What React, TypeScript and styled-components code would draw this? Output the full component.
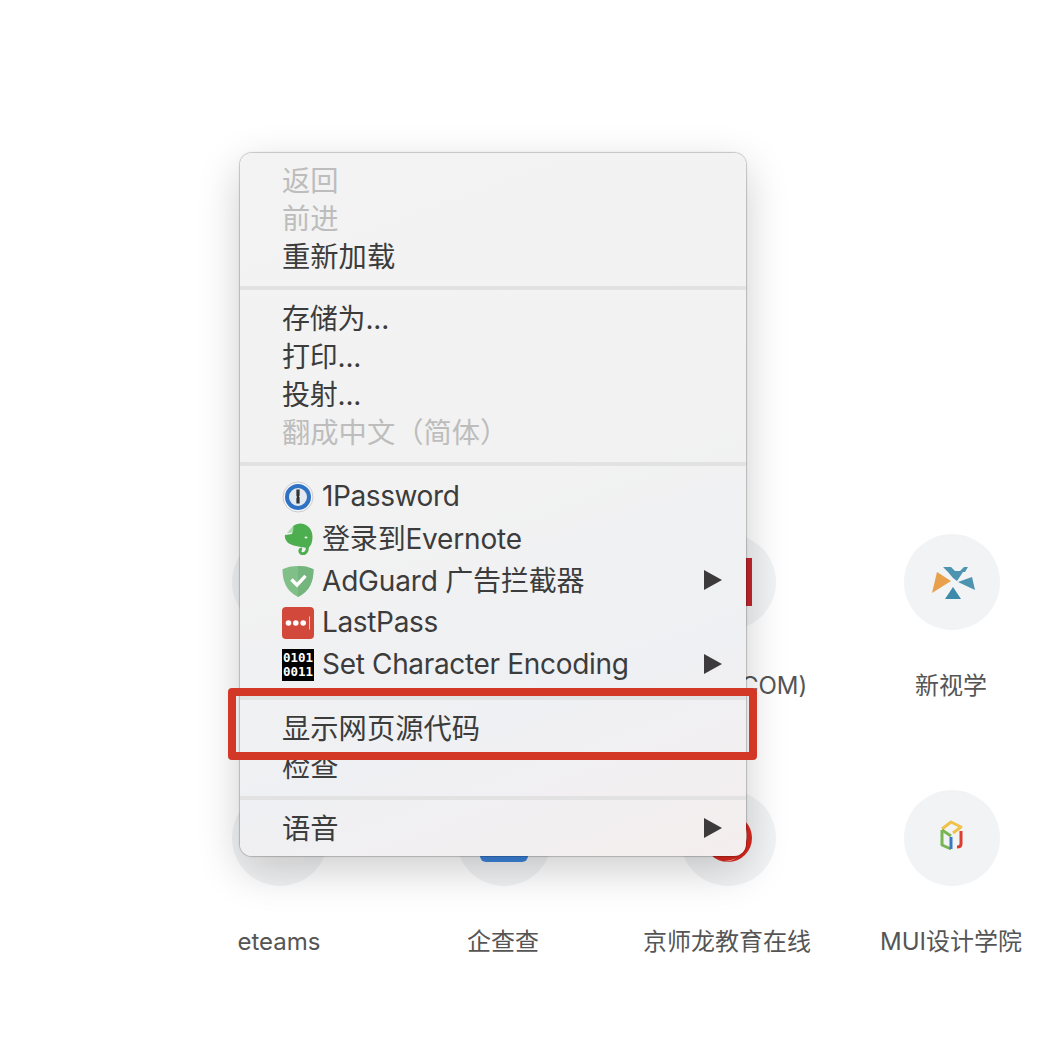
import React from "react";
import styled, { createGlobalStyle } from "styled-components";

const FONT = `Inter, "Noto Sans CJK SC", sans-serif`;

const GlobalStyle = createGlobalStyle`
  html, body {
    margin: 0;
    padding: 0;
    background: #fff;
    font-family: ${FONT};
  }
`;

const Page = styled.div`
  position: relative;
  width: 1056px;
  height: 1048px;
  overflow: hidden;
  background: #fff;
`;

const TileGrid = styled.div`
  display: grid;
  grid-template-columns: repeat(4, 224px);
  grid-auto-rows: 256px;
  padding: 534px 0 0 168px;
`;

const Tile = styled.div`
  display: flex;
  flex-direction: column;
  align-items: center;
`;

const Bubble = styled.div`
  width: 96px;
  height: 96px;
  border-radius: 50%;
  background: #f1f3f5;
  display: flex;
  align-items: center;
  justify-content: center;
  overflow: hidden;
  flex-shrink: 0;
`;

const TileLabel = styled.div`
  margin: 38px 2px 0 0;
  font-size: 24px;
  line-height: 36px;
  color: #555;
  white-space: nowrap;
`;

const RedRect = styled.div`
  width: 48px;
  height: 48px;
  background: #c4262c;
`;

const GreyRect = styled.div`
  width: 48px;
  height: 48px;
  background: #f5f5f5;
`;

const BlueRect = styled.div`
  width: 48px;
  height: 48px;
  border-radius: 6px;
  background: #3d84dc;
`;

const Menu = styled.div`
  position: absolute;
  left: 240px;
  top: 153px;
  width: 506px;
  height: 703px;
  box-sizing: border-box;
  padding: 7px 0;
  border-radius: 12px;
  background: linear-gradient(160deg, #f3f3f3 0%, #f2f2f2 45%, #eff0f3 75%, #f4eeee 100%);
  box-shadow: 0 0 1px 1px rgba(0, 0, 0, 0.2), 0 14px 44px rgba(0, 0, 0, 0.2);
`;

const Row = styled.div<{ $tall?: boolean; $disabled?: boolean }>`
  display: flex;
  align-items: center;
  height: ${(p) => (p.$tall ? 42 : 38)}px;
  padding: 0 24px 0 42px;
  color: ${(p) => (p.$disabled ? "#bdbdbd" : "#3c3c3c")};
`;

const RowText = styled.span<{ $tracking?: number; $nudge?: number }>`
  flex: 1;
  white-space: nowrap;
  font-size: ${(p) => (p.$tracking ? 28 : 28.3)}px;
  letter-spacing: ${(p) => p.$tracking ?? 0}px;
  margin-top: ${(p) => p.$nudge ?? 0}px;
`;

const IconSlot = styled.span`
  display: flex;
  width: 32px;
  height: 32px;
  margin: 4px 8px 0 0;
`;

const BinaryIcon = styled.span`
  width: 32px;
  height: 32px;
  background: #000;
  color: #fff;
  display: flex;
  flex-direction: column;
  align-items: center;
  justify-content: center;
  font-family: "DejaVu Sans Mono", monospace;
  font-size: 12.5px;
  font-weight: 700;
  line-height: 14px;
`;

const Arrow = styled.span`
  width: 0;
  height: 0;
  margin-top: 2px;
  border-left: 18px solid #3c3a3a;
  border-top: 10px solid transparent;
  border-bottom: 10px solid transparent;
`;

const Separator = styled.div`
  height: 4px;
  margin: 12px 0 8px;
  background: #e2e2e2;
`;

const Highlight = styled.div`
  position: absolute;
  left: 228px;
  top: 688px;
  width: 529px;
  height: 72px;
  box-sizing: border-box;
  border: 8px solid #d23825;
  border-radius: 4px;
`;

const OnePasswordIcon = () => (
  <svg width="32" height="32" viewBox="0 0 32 32">
    <circle cx="16" cy="16" r="15" fill="#f4f6f8" stroke="#c9cccf" strokeWidth="1" />
    <circle cx="16" cy="16" r="11" fill="#e3e9f0" stroke="#2f72c4" strokeWidth="4" />
    <path d="M14.400 8.500h3.200v6l-.7.9.7.9v6.200h-3.200v-5.600l.7-1-.7-1z" fill="#333" />
  </svg>
);

const EvernoteIcon = () => (
  <svg width="32" height="32" viewBox="0 0 32 32">
    <path
      d="M3 12 10 11 11 3Q14 .5 18 .5C25 .5 30.500 6 30.500 14 30.500 19 29 23 26 25 20 24 12 23.500 8 21 4 19 2.500 15 3 12z"
      fill="#4cae4f"
    />
    <path d="M25 22C26.500 29 22.500 31.500 19.500 30.500 17 29.500 17.500 26 20 26" fill="none" stroke="#4cae4f" strokeWidth="3" />
    <path d="M11.500 2.500 11 9.500 5 10z" fill="#a8d8a8" />
    <ellipse cx="24" cy="14.500" rx="1.500" ry="1.100" fill="#e8f5e8" />
  </svg>
);

const AdGuardIcon = () => (
  <svg width="32" height="32" viewBox="0 0 32 32">
    <path d="M16 1C10 1 4.500 2.200.5 4.300.5 16 4 26 16 32 28 26 31.500 16 31.500 4.300 27.500 2.200 22 1 16 1z" fill="#80bf88" />
    <path d="M16 1c6 0 11.500 1.200 15.500 3.300C31.500 16 28 26 16 32z" fill="#73b57c" />
    <path d="M9.500 14.500 15 20 23.500 10.800" fill="none" stroke="#fff" strokeWidth="3.400" />
  </svg>
);

const LastPassIcon = () => (
  <svg width="32" height="32" viewBox="0 0 32 32">
    <rect width="32" height="32" rx="4" fill="#d2493b" />
    <circle cx="6.500" cy="16" r="2.800" fill="#fff" />
    <circle cx="13.800" cy="16" r="2.800" fill="#fff" />
    <circle cx="21.200" cy="16" r="2.800" fill="#fff" />
    <rect x="27" y="9.500" width="1" height="13" fill="#f3c9c4" />
  </svg>
);

const XLogo = () => (
  <svg width="48" height="36" viewBox="0 0 48 36">
    <path d="M4 29 9 8 23 17z" fill="#e9a04a" />
    <path d="M17 35 25 23 33 35z" fill="#3e8aab" />
    <path d="M15 3 23 3 27 7 32 7 36 3 40 3 37 8 35 8 29 17 25 14 20 8z" fill="#4c94b0" />
    <path d="M30 18 44 13 47 26z" fill="#4c94b0" />
  </svg>
);

const CubeLogo = () => (
  <svg width="26" height="36" viewBox="0 0 26 36">
    <g fill="none" strokeWidth="3" strokeLinejoin="round">
      <path d="M3 9 12 2 22 7 14 13" stroke="#f1c24b" />
      <path d="M3 10v15l9 4" stroke="#79b552" />
      <path d="M3 10l9 6" stroke="#79b552" />
      <path d="M12 17v12" stroke="#3b78c4" />
      <path d="M22 11v13c0 2-2 3-4 3" stroke="#dd3c30" />
    </g>
  </svg>
);

const RedRoundLogo = () => (
  <svg width="48" height="48" viewBox="0 0 48 48">
    <circle cx="24" cy="24" r="24" fill="#d8291f" />
    <path d="M41 12c4 10 2 22-9 30 6-8 7-19 9-30z" fill="#f4d6d2" />
    <path d="M20 47c5 0 8-1 12-3-4 3-8 4-12 3z" fill="#f4d6d2" />
  </svg>
);

const tiles: { label: string; logo?: React.ReactNode }[] = [
  { label: "" },
  { label: "" },
  { label: "网站(Wt.COM)", logo: <RedRect /> },
  { label: "新视学", logo: <XLogo /> },
  { label: "eteams", logo: <GreyRect /> },
  { label: "企查查", logo: <BlueRect /> },
  { label: "京师龙教育在线", logo: <RedRoundLogo /> },
  { label: "MUI设计学院", logo: <CubeLogo /> },
];

type MenuRow = {
  text: string;
  disabled?: boolean;
  icon?: React.ReactNode;
  sub?: boolean;
  tracking?: number;
  nudge?: number;
};

const groups: MenuRow[][] = [
  [
    { text: "返回", disabled: true, nudge: -2 },
    { text: "前进", disabled: true, nudge: -2 },
    { text: "重新加载", nudge: -2 },
  ],
  [
    { text: "存储为...", tracking: -0.2 },
    { text: "打印...", tracking: -0.2 },
    { text: "投射...", tracking: -0.2 },
    { text: "翻成中文（简体）", disabled: true, nudge: -2 },
  ],
  [
    { text: "1Password", icon: <OnePasswordIcon />, tracking: -0.4, nudge: 2 },
    { text: "登录到Evernote", icon: <EvernoteIcon />, tracking: -0.18 },
    { text: "AdGuard 广告拦截器", icon: <AdGuardIcon />, sub: true, tracking: -0.18 },
    { text: "LastPass", icon: <LastPassIcon />, tracking: -0.35, nudge: 2 },
    {
      text: "Set Character Encoding",
      icon: (
        <BinaryIcon>
          <span>0101</span>
          <span>0011</span>
        </BinaryIcon>
      ),
      sub: true,
      tracking: -0.33,
      nudge: 2,
    },
  ],
  [{ text: "显示网页源代码", nudge: -2 }, { text: "检查", nudge: -2 }],
  [{ text: "语音", sub: true, nudge: -2 }],
];

export default function App() {
  return (
    <Page>
      <GlobalStyle />
      <TileGrid>
        {tiles.map((tile, i) => (
          <Tile key={i}>
            <Bubble>{tile.logo}</Bubble>
            <TileLabel>{tile.label}</TileLabel>
          </Tile>
        ))}
      </TileGrid>
      <Menu>
        {groups.map((group, i) => (
          <React.Fragment key={i}>
            {i > 0 && <Separator />}
            {group.map((row) => (
              <Row key={row.text} $tall={!!row.icon} $disabled={row.disabled}>
                {row.icon && <IconSlot>{row.icon}</IconSlot>}
                <RowText $tracking={row.tracking} $nudge={row.nudge}>
                  {row.text}
                </RowText>
                {row.sub && <Arrow />}
              </Row>
            ))}
          </React.Fragment>
        ))}
      </Menu>
      <Highlight />
    </Page>
  );
}
